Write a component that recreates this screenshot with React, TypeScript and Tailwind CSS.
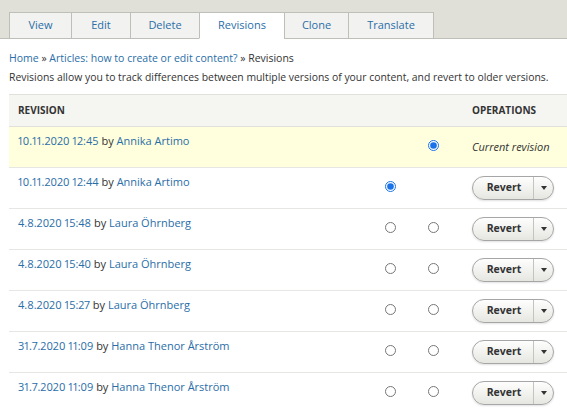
const TABS = [
  { label: "View", w: "w-[62px]" },
  { label: "Edit", w: "w-[59px]" },
  { label: "Delete", w: "w-[69px]" },
  { label: "Revisions", w: "w-[85px]", active: true },
  { label: "Clone", w: "w-[64px]" },
  { label: "Translate", w: "w-[86px]" },
];

type Rev = {
  date: string;
  author: string;
  current?: boolean;
  left?: "checked" | "open" | "none";
  right?: "checked" | "open" | "none";
};

const REVISIONS: Rev[] = [
  { date: "10.11.2020 12:45", author: "Annika Artimo", current: true, left: "none", right: "checked" },
  { date: "10.11.2020 12:44", author: "Annika Artimo", left: "checked", right: "none" },
  { date: "4.8.2020 15:48", author: "Laura Öhrnberg", left: "open", right: "open" },
  { date: "4.8.2020 15:40", author: "Laura Öhrnberg", left: "open", right: "open" },
  { date: "4.8.2020 15:27", author: "Laura Öhrnberg", left: "open", right: "open" },
  { date: "31.7.2020 11:09", author: "Hanna Thenor Årström", left: "open", right: "open" },
  { date: "31.7.2020 11:09", author: "Hanna Thenor Årström", left: "open", right: "open" },
];

function Radio({ state }: { state?: "checked" | "open" | "none" }) {
  if (!state || state === "none") return null;
  return (
    <input
      type="radio"
      readOnly
      checked={state === "checked"}
      className="m-0 mb-[4px] block h-[11px] w-[11px] accent-[#1a73e8]"
    />
  );
}

function RevertButton() {
  return (
    <div className="flex h-[24px] w-[82px] overflow-hidden rounded-full border border-[#a6a6a6] bg-gradient-to-b from-[#fefefe] to-[#e6e6e1] shadow-[0_1px_2px_rgba(0,0,0,0.12)]">
      <button className="flex-1 pl-[2px] text-[10.5px] font-bold text-[#333]">Revert</button>
      <div className="flex w-[20px] items-center justify-center border-l border-[#c4c4bf]">
        <span className="block h-0 w-0 border-x-[3.5px] border-t-[4px] border-x-transparent border-t-[#333]" />
      </div>
    </div>
  );
}

export default function App() {
  return (
    <div className="h-[413px] w-[567px] overflow-hidden bg-white text-[11px] text-[#333] [font-family:'Open_Sans',sans-serif]">
      <div className="flex h-[39px] items-end border-b border-[#bebfb9] bg-[#e0e0d8] pl-[9px]">
        {TABS.map((t) => (
          <div
            key={t.label}
            className={`${t.w} -mb-px flex h-[27px] items-center justify-center border border-r-0 border-[#bfbfba] last:border-r ${
              t.active ? "border-b-white bg-white" : "bg-[#f2f2f0]"
            } text-[11px] text-[#2a6ea8]`}
          >
            {t.label}
          </div>
        ))}
      </div>

      <div className="pl-[9px]">
        <div className="mt-[10px] whitespace-nowrap text-[10.5px] leading-[19px]">
          <a className="text-[#2a6ea8]">Home</a> » <a className="text-[#2a6ea8]">Articles: how to create or edit content?</a> » Revisions
        </div>
        <p className="whitespace-nowrap text-[10.4px] leading-[19px]">
          Revisions allow you to track differences between multiple versions of your content, and revert to older versions.
        </p>

        <table className="mt-[7px] w-[558px] table-fixed border-collapse whitespace-nowrap">
          <thead>
            <tr className="h-[32px] border-y border-[#e0e0dc] bg-[#f5f5f2] text-left text-[10px] font-bold uppercase">
              <th className="w-[363px] pl-[9px]">Revision</th>
              <th className="w-[43px]"></th>
              <th className="w-[44px]"></th>
              <th className="pl-[13px]">Operations</th>
            </tr>
          </thead>
          <tbody>
            {REVISIONS.map((r, i) => (
              <tr
                key={i}
                className={`h-[41px] border-b border-[#e6e6e2] ${r.current ? "bg-[#ffffdd]" : "bg-white"}`}
              >
                <td className="pl-[9px] pb-[11px] align-middle text-[11px] proportional-nums">
                  <a className="text-[#2a6ea8]">{r.date}</a> by <a className="text-[#2a6ea8]">{r.author}</a>
                </td>
                <td className="pl-[13px] align-middle">
                  <Radio state={r.left} />
                </td>
                <td className="pl-[13px] align-middle">
                  <Radio state={r.right} />
                </td>
                <td className="pl-[13px] align-middle">
                  {r.current ? <em className="text-[11px]">Current revision</em> : <RevertButton />}
                </td>
              </tr>
            ))}
          </tbody>
        </table>
      </div>
    </div>
  );
}
